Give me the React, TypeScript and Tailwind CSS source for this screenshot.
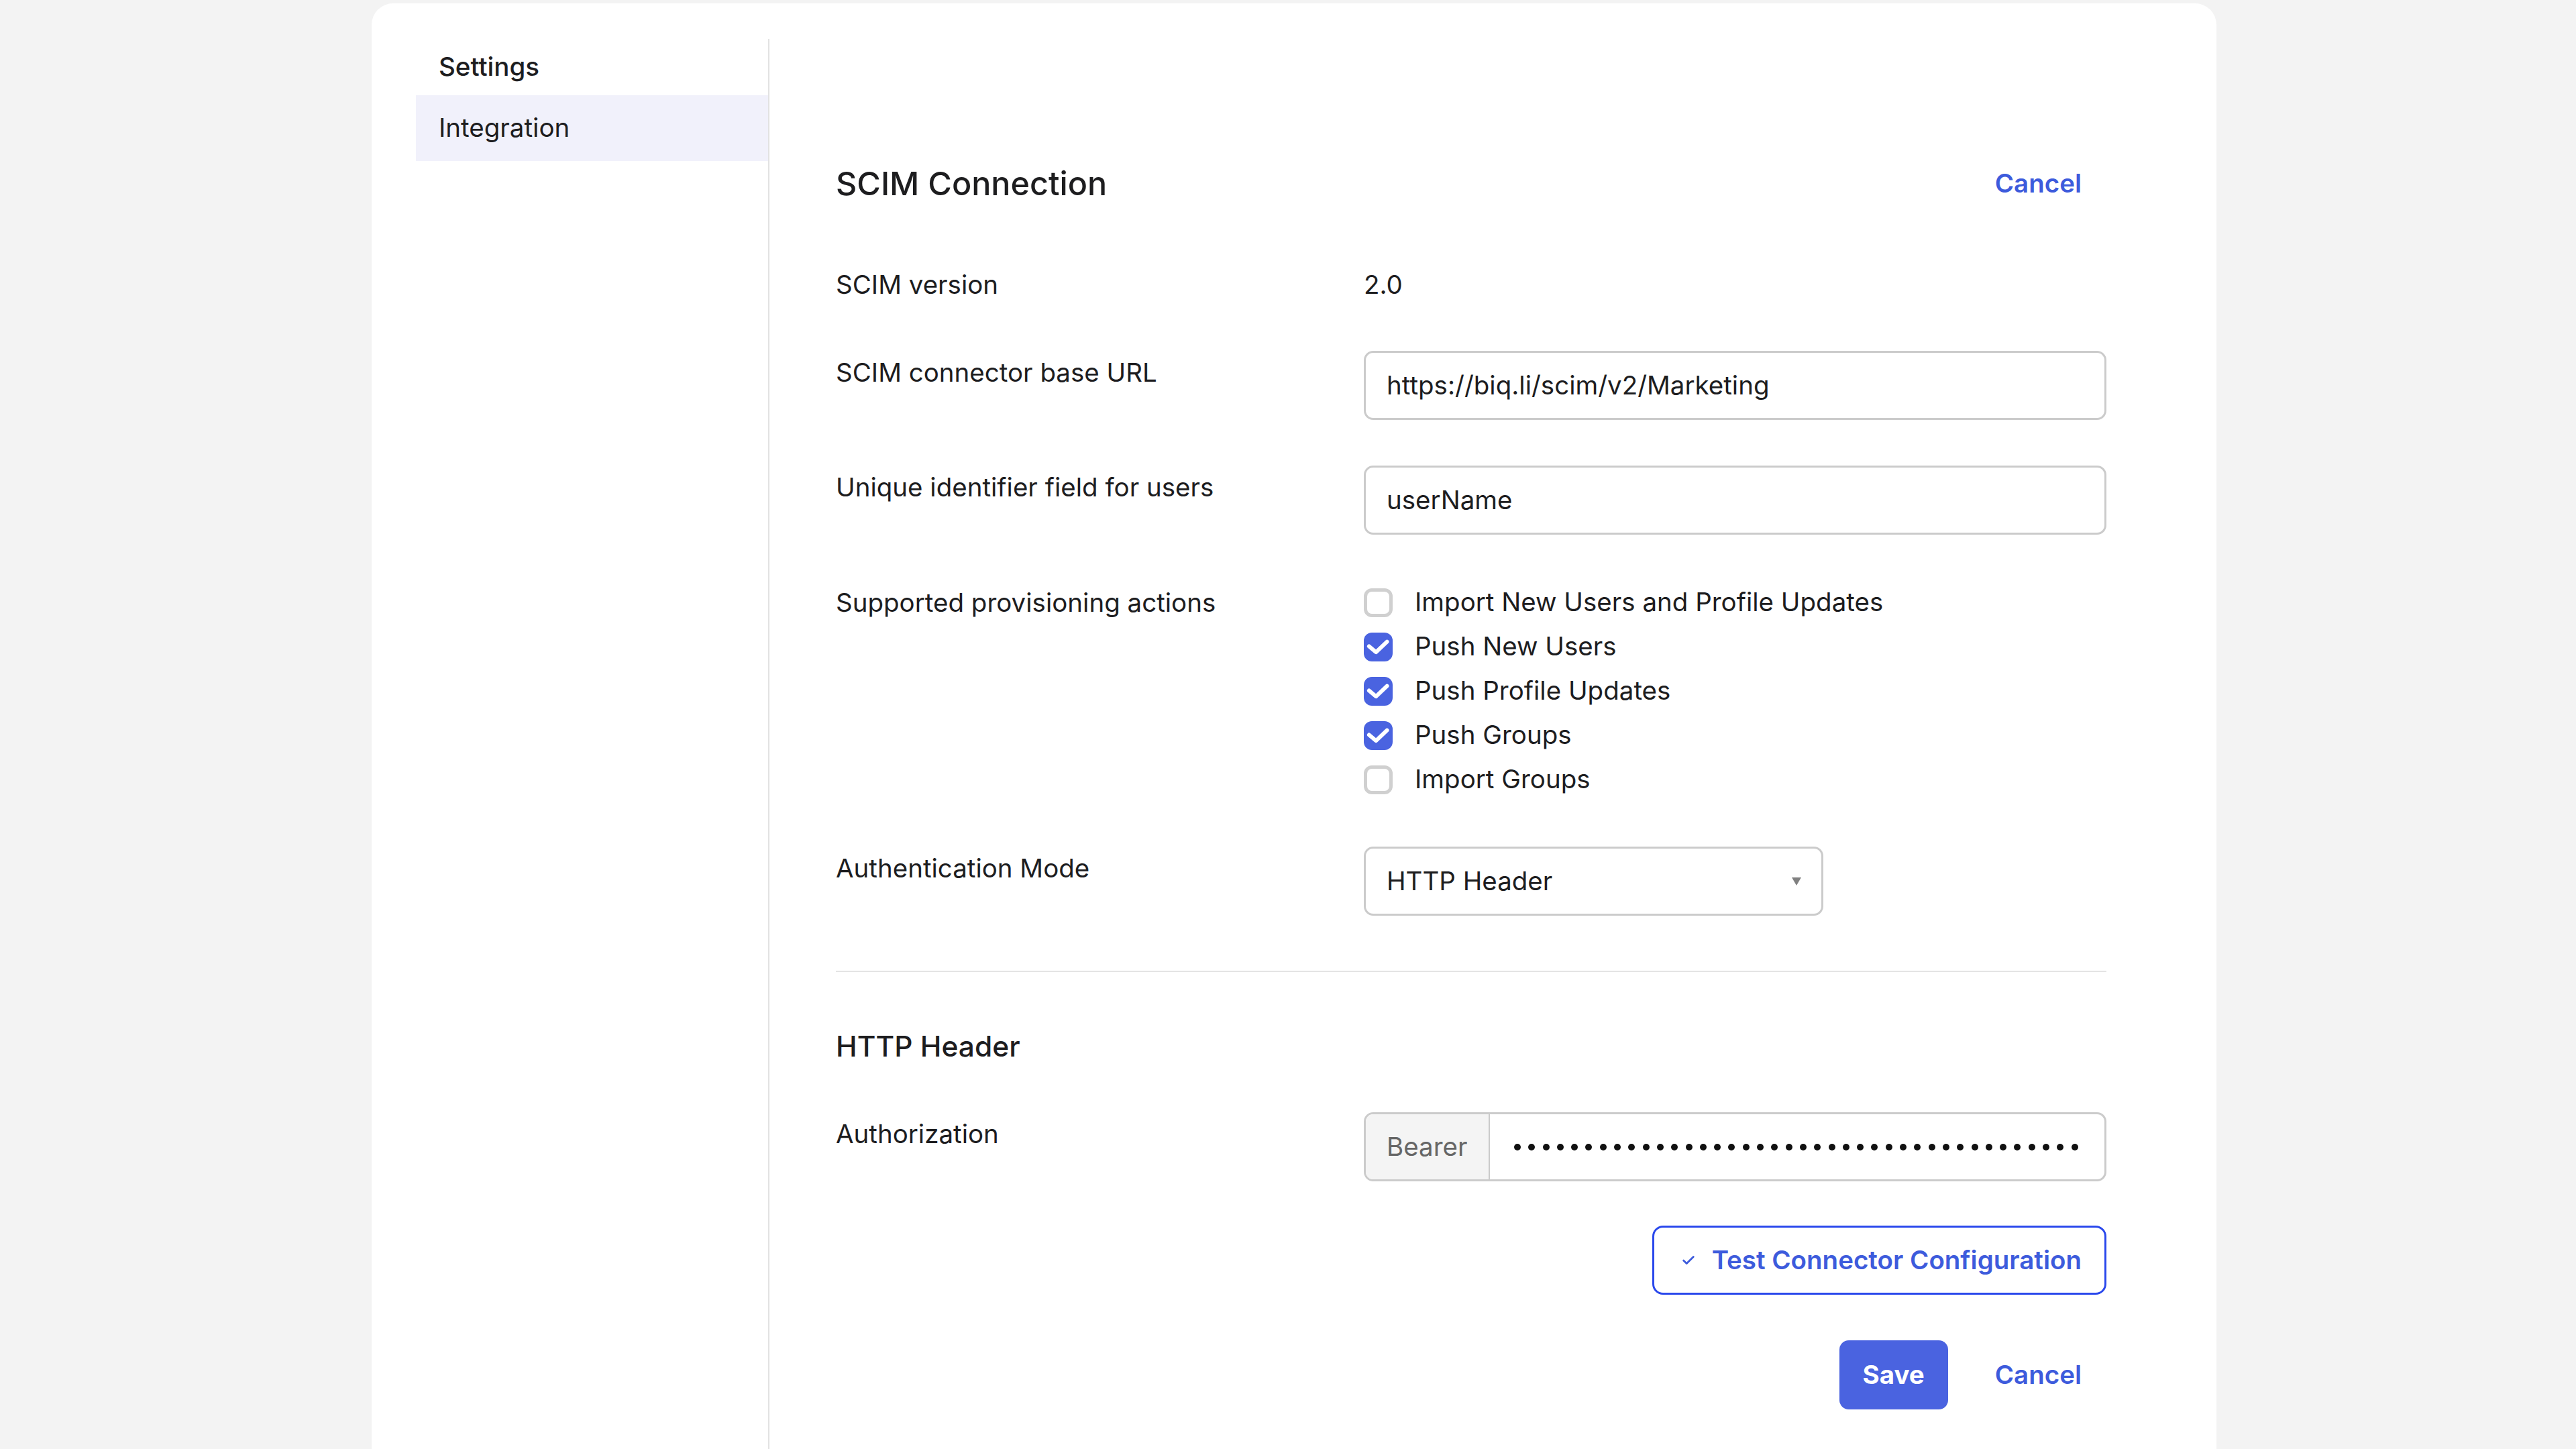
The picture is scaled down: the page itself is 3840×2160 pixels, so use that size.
import { Check } from "lucide-react";

type Action = { label: string; checked: boolean };

const actions: Action[] = [
  { label: "Import New Users and Profile Updates", checked: false },
  { label: "Push New Users", checked: true },
  { label: "Push Profile Updates", checked: true },
  { label: "Push Groups", checked: true },
  { label: "Import Groups", checked: false },
];

const Checkbox = ({ checked }: { checked: boolean }) =>
  checked ? (
    <span className="h-[43px] w-[43px] shrink-0 rounded-[12px] bg-[#4a63e0]">
      <svg viewBox="0 0 24 24" className="h-[43px] w-[43px]" fill="none" stroke="white" strokeWidth={3.3} strokeLinecap="round" strokeLinejoin="round">
        <path d="M4.4 11.4l5.8 4.9 9.1-8.7" />
      </svg>
    </span>
  ) : (
    <span className="h-[43px] w-[43px] shrink-0 rounded-[12px] border-[5px] border-[#d0d0d0] bg-white" />
  );

const Row = ({ label, children, labelClass = "pt-[9px]" }: { label: string; children: React.ReactNode; labelClass?: string }) => (
  <div className="flex">
    <div className={`w-[787px] shrink-0 leading-[46px] ${labelClass}`}>{label}</div>
    <div className="flex-1">{children}</div>
  </div>
);

export default function App() {
  return (
    <div className="min-h-screen bg-[#f3f3f3] pt-[5px] font-['Inter','Noto_Sans',sans-serif] text-[38.5px] text-[#1d1d1f]">
      <div className="ml-[554px] flex h-[2155px] w-[2750px] rounded-t-[32px] bg-white pl-[66px]">
        {/* sidebar */}
        <aside className="mt-[53px] w-[527px] shrink-0 border-r-2 border-[#e2e2e2]">
          <div className="flex h-[84px] items-center px-[34px] font-medium">Settings</div>
          <div className="flex h-[98px] items-center bg-[#f1f1fb] px-[34px]">Integration</div>
        </aside>

        {/* main */}
        <main className="box-content flex w-[1894px] flex-col pl-[99px] pt-[240px]">
          <div className="flex h-[58px] items-center justify-between">
            <h1 className="text-[48.5px] font-medium">SCIM Connection</h1>
            <button type="button" className="px-[37px] font-semibold text-[#3d5bdc]">
              Cancel
            </button>
          </div>

          <div className="mt-[98px]">
            <Row label="SCIM version" labelClass="">
              <div className="leading-[46px]">2.0</div>
            </Row>
          </div>

          <div className="mt-[76px]">
            <Row label="SCIM connector base URL">
              <div className="flex h-[103px] items-center rounded-[14px] border-[3px] border-[#cbcbcb] px-[31px]">
                https://biq.li/scim/v2/Marketing
              </div>
            </Row>
          </div>

          <div className="mt-[68px]">
            <Row label="Unique identifier field for users">
              <div className="flex h-[103px] items-center rounded-[14px] border-[3px] border-[#cbcbcb] px-[31px]">
                userName
              </div>
            </Row>
          </div>

          <div className="mt-[68px]">
            <Row label="Supported provisioning actions" labelClass="leading-[66px]">
              <ul>
                {actions.map((a) => (
                  <li key={a.label} className="flex h-[66px] items-center gap-[33px]">
                    <Checkbox checked={a.checked} />
                    <span>{a.label}</span>
                  </li>
                ))}
              </ul>
            </Row>
          </div>

          <div className="mt-[67px]">
            <Row label="Authentication Mode">
              <div className="flex h-[103px] w-[685px] items-center justify-between rounded-[14px] border-[3px] border-[#cbcbcb] pl-[31px] pr-[30px]">
                <span>HTTP Header</span>
                <svg viewBox="0 0 14 12" className="h-[12px] w-[14px]">
                  <path d="M0 0h14L7 12z" fill="#808080" />
                </svg>
              </div>
            </Row>
          </div>

          <div className="mt-[82px] h-[2px] bg-[#e4e4e4]" />

          <h2 className="mt-[86px] text-[42.5px] font-medium leading-[50px]">HTTP Header</h2>

          <div className="mt-[73px]">
            <Row label="Authorization">
              <div className="flex h-[103px] overflow-hidden rounded-[14px] border-[3px] border-[#cbcbcb]">
                <div className="flex w-[185px] items-center border-r-2 border-[#cbcbcb] bg-[#f4f4f4] pl-[31px] text-[#666666]">
                  Bearer
                </div>
                <div className="flex flex-1 items-center gap-[11.3px] pl-[36px]">
                  {Array.from({ length: 40 }).map((_, i) => (
                    <span key={i} className="h-[10px] w-[10px] rounded-full bg-[#111111]" />
                  ))}
                </div>
              </div>
            </Row>
          </div>

          <div className="mt-[66px] flex justify-end">
            <button
              type="button"
              className="flex h-[103px] items-center gap-[24px] rounded-[16px] border-[3px] border-[#2a48ec] pl-[40px] pr-[34px] font-semibold text-[#3d5bdc]"
            >
              <Check className="h-[22px] w-[22px]" strokeWidth={3} />
              Test Connector Configuration
            </button>
          </div>

          <div className="mt-[68px] flex items-center justify-end gap-[33px]">
            <button type="button" className="h-[103px] w-[162px] rounded-[14px] bg-[#4a63e0] font-bold text-white">
              Save
            </button>
            <button type="button" className="px-[37px] font-semibold text-[#3d5bdc]">
              Cancel
            </button>
          </div>
        </main>
      </div>
    </div>
  );
}
